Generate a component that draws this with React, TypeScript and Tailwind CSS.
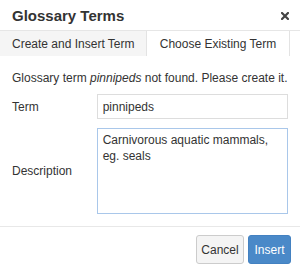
import React from 'react';

const GlossaryDialog: React.FC = () => {
    return (
        <div className="w-[300px] h-[268px] overflow-hidden bg-white text-[#333] font-['Liberation_Sans',Arial,sans-serif]">
            <div className="h-[30px] flex items-center justify-between pl-3 pr-[11px]">
                <h1 className="text-[15px] font-bold leading-none pt-[1px]">Glossary Terms</h1>
                <svg width="8" height="8" viewBox="0 0 8 8" className="mt-[1px]">
                    <path d="M1 1 L7 7 M7 1 L1 7" stroke="#444" strokeWidth="2.2" strokeLinecap="square" />
                </svg>
            </div>
            {/* tabs */}
            <div className="h-[26px] flex border-t border-[#e6e6e6] text-[12px]">
                <div className="w-[146px] bg-[#f5f5f5] flex items-center pl-3 pt-[1px]">Create and Insert Term</div>
                <div className="w-[144px] border-x border-[#e3e3e3] flex items-center justify-center pt-[1px]">Choose Existing Term</div>
                <div className="flex-1"></div>
            </div>
            <div className="px-3 text-[12px]">
                <p className="mt-[14px] leading-[16px]">
                    Glossary term <i>pinnipeds</i> not found. Please create it.
                </p>
                <div className="flex items-center mt-[8px]">
                    <label className="w-[85px]" htmlFor="term">Term</label>
                    <input
                        id="term"
                        className="w-[192px] h-[25px] border border-[#ddd] px-[5px] text-[12px] outline-none"
                        defaultValue="pinnipeds"
                    />
                </div>
                <div className="flex items-center mt-[9px]">
                    <label className="w-[85px]" htmlFor="desc">Description</label>
                    <textarea
                        id="desc"
                        className="w-[192px] h-[86px] border border-[#a9c7ea] px-[5px] py-[3px] text-[12px] leading-[16px] outline-none resize-none"
                        defaultValue={'Carnivorous aquatic mammals,\neg. seals'}
                    />
                </div>
            </div>
            <div className="mt-[12px] border-t border-[#e8e8e8] flex justify-end gap-[4px] pr-[9px] pt-[8px]">
                <button className="h-[29px] w-[48px] border border-[#ccc] bg-[#f4f4f4] rounded-[3px] text-[12px] text-[#333]">Cancel</button>
                <button className="h-[29px] w-[43px] border border-[#4381c1] bg-[#4a89c8] rounded-[3px] text-[12px] text-white">Insert</button>
            </div>
        </div>
    );
};

export default function App() {
    return <GlossaryDialog />;
}
